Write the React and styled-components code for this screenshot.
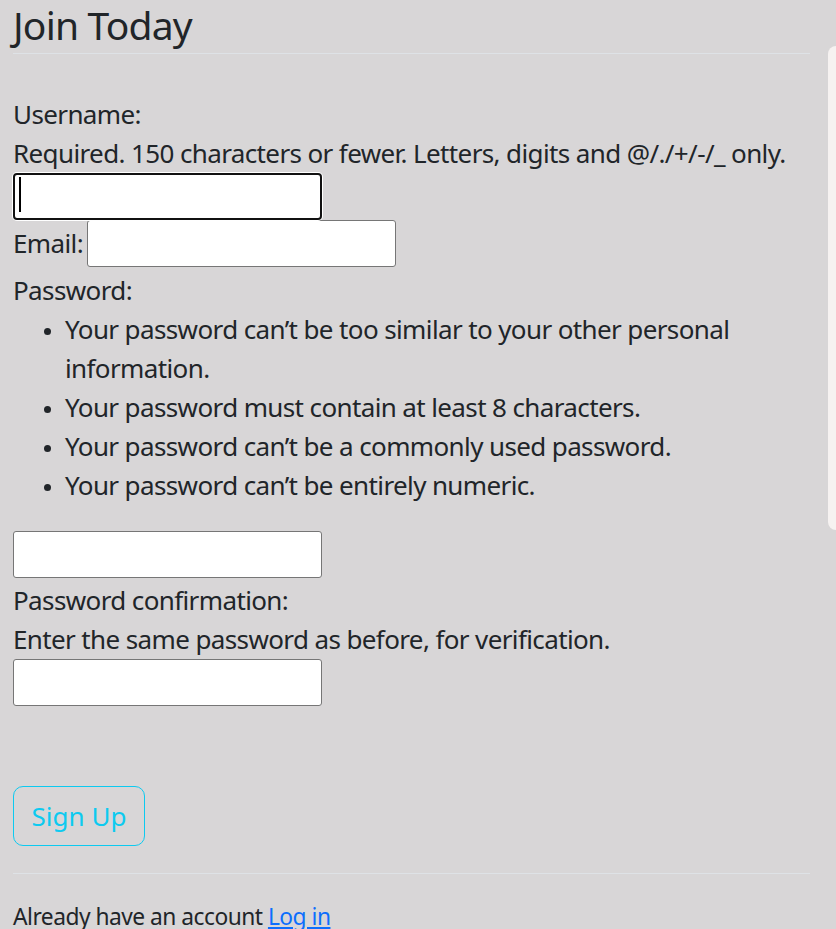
import React from "react";
import styled, { createGlobalStyle } from "styled-components";

const GlobalStyle = createGlobalStyle`
  html, body {
    margin: 0;
    padding: 0;
    background: #d8d6d7;
    overflow: hidden;
  }
  body {
    font-family: "Noto Sans", "Open Sans", sans-serif;
    font-size: 26px;
    line-height: 39px;
    letter-spacing: -0.62px;
    color: #212529;
  }
`;

const Page = styled.div`
  display: flex;
  align-items: flex-start;
  padding-left: 13px;
  gap: 18px;
  width: 836px;
  height: 929px;
  box-sizing: border-box;
`;

const Main = styled.div`
  width: 797px;
  flex-shrink: 0;
`;

const Sidebar = styled.aside`
  flex: 1;
  margin-top: 46px;
  height: 484px;
  background: #f6f2f1;
  border-radius: 10px 0 0 10px;
`;

const Heading = styled.h1`
  margin: 0 0 41px;
  font-size: 39px;
  font-weight: 400;
  letter-spacing: -0.8px;
  line-height: 49px;
  padding-bottom: 4px;
  border-bottom: 1px solid #dee2e6;
`;

const Label = styled.div`
  margin-top: ${(p) => p.$top || 0}px;
`;

const Help = styled.div``;

const Input = styled.input`
  display: block;
  box-sizing: border-box;
  width: 309px;
  height: 47px;
  margin: 0;
  padding: 0 6px;
  background: #fff;
  border: ${(p) => (p.$focused ? "2px solid #111" : "1px solid #767676")};
  border-radius: ${(p) => (p.$focused ? 4 : 3)}px;
  box-shadow: ${(p) => (p.$focused ? "0 0 0 1px #fff" : "none")};
  outline: none;
  font: inherit;
`;

const FocusWrap = styled.div`
  position: relative;
  width: 309px;
`;

const Caret = styled.span`
  position: absolute;
  left: 6px;
  top: 4px;
  width: 2px;
  height: 35px;
  background: #000;
`;

const InlineRow = styled.div`
  display: flex;
  align-items: center;
  gap: 4px;
  height: 47px;
`;

const Rules = styled.ul`
  margin: 0 0 26px;
  padding-left: 52px;

  li::marker {
    font-size: 20px;
  }
`;

const Button = styled.button`
  display: block;
  margin-top: 80px;
  width: 132px;
  height: 60px;
  padding: 0;
  background: transparent;
  border: 1px solid #0dcaf0;
  border-radius: 10px;
  color: #0dcaf0;
  font: inherit;
  cursor: pointer;
`;

const Rule = styled.hr`
  margin: 27px 0 26px;
  border: 0;
  border-top: 1px solid #dee2e6;
`;

const Footer = styled.small`
  display: block;
  font-size: 22.75px;
  line-height: 34px;
  letter-spacing: -0.5px;
`;

const Link = styled.a`
  color: #0d6efd;
  text-decoration: underline;
`;

export default function App() {
  return (
    <>
      <GlobalStyle />
      <Page>
        <Main>
          <Heading>Join Today</Heading>
          <Label>Username:</Label>
          <Help>Required. 150 characters or fewer. Letters, digits and @/./+/-/_ only.</Help>
          <FocusWrap>
            <Input $focused type="text" />
            <Caret />
          </FocusWrap>
          <InlineRow>
            <span>Email:</span>
            <Input type="email" />
          </InlineRow>
          <Label $top={4}>Password:</Label>
          <Rules>
            <li>Your password can’t be too similar to your other personal information.</li>
            <li>Your password must contain at least 8 characters.</li>
            <li>Your password can’t be a commonly used password.</li>
            <li>Your password can’t be entirely numeric.</li>
          </Rules>
          <Input type="password" />
          <Label $top={3}>Password confirmation:</Label>
          <Help>Enter the same password as before, for verification.</Help>
          <Input type="password" />
          <Button>Sign Up</Button>
          <Rule />
          <Footer>
            Already have an account <Link href="#">Log in</Link>
          </Footer>
        </Main>
        <Sidebar />
      </Page>
    </>
  );
}
